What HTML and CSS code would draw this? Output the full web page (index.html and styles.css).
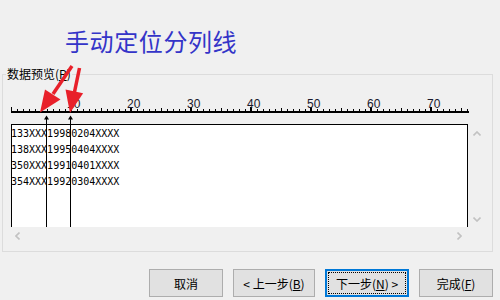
FILE: index.html
```html
<!DOCTYPE html>
<html lang="zh-CN">
<head>
    <meta charset="UTF-8">
    <meta name="viewport" content="width=device-width, initial-scale=1.0">
    <title>文本分列向导</title>
    <link rel="stylesheet" href="styles.css">
</head>
<body>
    <div class="window">
        <h1 class="title">手动定位分列线</h1>

        <!-- Data preview group -->
        <div class="group">
            <span class="group-label">数据预览(<u>P</u>)</span>
            <div class="preview">
                <svg class="ruler" width="458" height="29" viewBox="0 0 458 29">
                    <defs>
                        <pattern id="tick1" width="6" height="29" patternUnits="userSpaceOnUse"><rect width="1" height="29"/></pattern>
                        <pattern id="tick5" x="30" width="60" height="29" patternUnits="userSpaceOnUse"><rect width="1" height="29"/></pattern>
                        <pattern id="tick10" x="-1" width="60" height="29" patternUnits="userSpaceOnUse"><rect width="2" height="29"/></pattern>
                    </defs>
                    <rect x="0" y="14" width="457" height="2" fill="url(#tick1)"/>
                    <rect x="0" y="13" width="458" height="3" fill="url(#tick5)"/>
                    <rect x="0" y="12" width="458" height="4" fill="url(#tick10)"/>
                    <rect x="0" y="16" width="458" height="2"/>
                    <g class="ruler-nums">
                        <text x="56" y="12.5">10</text>
                        <text x="116" y="12.5">20</text>
                        <text x="176" y="12.5">30</text>
                        <text x="236" y="12.5">40</text>
                        <text x="296" y="12.5">50</text>
                        <text x="356" y="12.5">60</text>
                        <text x="416" y="12.5">70</text>
                    </g>
                </svg>
                <div class="data-row">
                    <div class="data-box">
                        <div class="data-line">133XXX19980204XXXX</div>
                        <div class="data-line">138XXX19950404XXXX</div>
                        <div class="data-line">350XXX19910401XXXX</div>
                        <div class="data-line">354XXX19920304XXXX</div>
                    </div>
                    <div class="vscroll">
                        <svg width="8" height="5" viewBox="0 0 8 5"><polyline points="0.5,4.5 4,1 7.5,4.5"/></svg>
                        <svg width="8" height="5" viewBox="0 0 8 5"><polyline points="0.5,0.5 4,4 7.5,0.5"/></svg>
                    </div>
                </div>
                <div class="hscroll">
                    <svg width="5" height="8" viewBox="0 0 5 8"><polyline points="4.5,0.5 1,4 4.5,7.5"/></svg>
                    <svg width="5" height="8" viewBox="0 0 5 8"><polyline points="0.5,0.5 4,4 0.5,7.5"/></svg>
                </div>

                <!-- column break lines -->
                <svg class="splits" width="458" height="132" viewBox="0 0 458 132">
                    <polygon points="35.5,20.5 33,24.5 38,24.5"/>
                    <rect x="35" y="24" width="1" height="108"/>
                    <polygon points="59.5,20.5 57,24.5 62,24.5"/>
                    <rect x="59" y="24" width="1" height="108"/>
                </svg>
            </div>
        </div>

        <div class="buttons">
            <button class="btn btn-cancel">取消</button>
            <button class="btn btn-back">&lt; 上一步(<u>B</u>)</button>
            <button class="btn btn-next">下一步(<u>N</u>) &gt;</button>
            <button class="btn btn-finish">完成(<u>F</u>)</button>
        </div>

        <!-- red annotation arrows -->
        <svg class="annotations" width="500" height="300" viewBox="0 0 500 300">
            <line x1="72" y1="66" x2="53" y2="94" />
            <polygon points="40,112.5 45,89.5 60.5,99.5"/>
            <line x1="79.5" y1="68" x2="74.5" y2="92" />
            <polygon points="70,113 65.5,89.6 83.1,93.2"/>
        </svg>
    </div>
</body>
</html>
```

FILE: styles.css
```css
* {
    margin: 0;
    padding: 0;
    box-sizing: border-box;
}
body {
    background: #f0f0f0;
    font-family: "Noto Sans CJK SC", "Noto Sans", sans-serif;
    color: #000;
    overflow: hidden;
}
.window {
    position: relative;
    width: 500px;
    height: 300px;
    padding-top: 29px;
}
.title {
    margin-left: 65px;
    font-size: 24px;
    line-height: 24px;
    font-weight: normal;
    letter-spacing: 0.6px;
    color: #3434c8;
}
.group {
    position: relative;
    margin: 21px 0 0 2px;
    width: 491px;
    height: 178px;
    border: 1px solid #dcdcdc;
    padding: 20px 0 0 8px;
}
.group-label {
    position: absolute;
    top: -8px;
    left: 3px;
    padding: 0 1px;
    font-size: 12px;
    line-height: 14px;
    background: #f0f0f0;
}
.group-label u,
.btn u {
    text-underline-offset: 1px;
}
.preview {
    position: relative;
    width: 475px;
}
.ruler {
    display: block;
    fill: #000;
}
.ruler-nums {
    font-family: "Liberation Sans", Arial, sans-serif;
    font-size: 12px;
    fill: #1a1a2e;
}
.data-row {
    display: flex;
}
.data-box {
    width: 457px;
    height: 103px;
    background: #fff;
    border: 1px solid #000;
    border-bottom: none;
    padding-top: 1px;
}
.data-line {
    margin-left: -1px;
    font-family: "DejaVu Sans Mono", "Liberation Mono", monospace;
    font-size: 10px;
    line-height: 16px;
    white-space: pre;
}
.vscroll {
    width: 17px;
    height: 103px;
    display: flex;
    flex-direction: column;
    justify-content: space-between;
    align-items: center;
    padding: 7px 0 5px;
}
.hscroll {
    width: 457px;
    height: 17px;
    display: flex;
    justify-content: space-between;
    align-items: center;
    padding: 0 6px 0 4px;
}
.vscroll svg,
.hscroll svg {
    display: block;
    fill: none;
    stroke: #c2c2c2;
    stroke-width: 1.6;
}
.splits {
    position: absolute;
    top: 0;
    left: 0;
    fill: #000;
    pointer-events: none;
}
.buttons {
    display: flex;
    justify-content: flex-end;
    gap: 10px;
    margin-top: 17px;
    padding-right: 7px;
}
.btn {
    height: 28px;
    background: #e1e1e1;
    border: 1px solid #adadad;
    font-family: "Noto Sans CJK SC", "Noto Sans", sans-serif;
    font-size: 12px;
    color: #000;
}
.btn-cancel, .btn-finish { width: 74px; }
.btn-back { width: 82px; }
.btn-next {
    width: 84px;
    border: 2px solid #0078d7;
    outline: 1px dotted #000;
    outline-offset: -4px;
}
.annotations {
    position: absolute;
    top: 0;
    left: 0;
    pointer-events: none;
}
.annotations line {
    stroke: #e8202a;
    stroke-width: 3.5;
}
.annotations polygon {
    fill: #e8202a;
}
```
